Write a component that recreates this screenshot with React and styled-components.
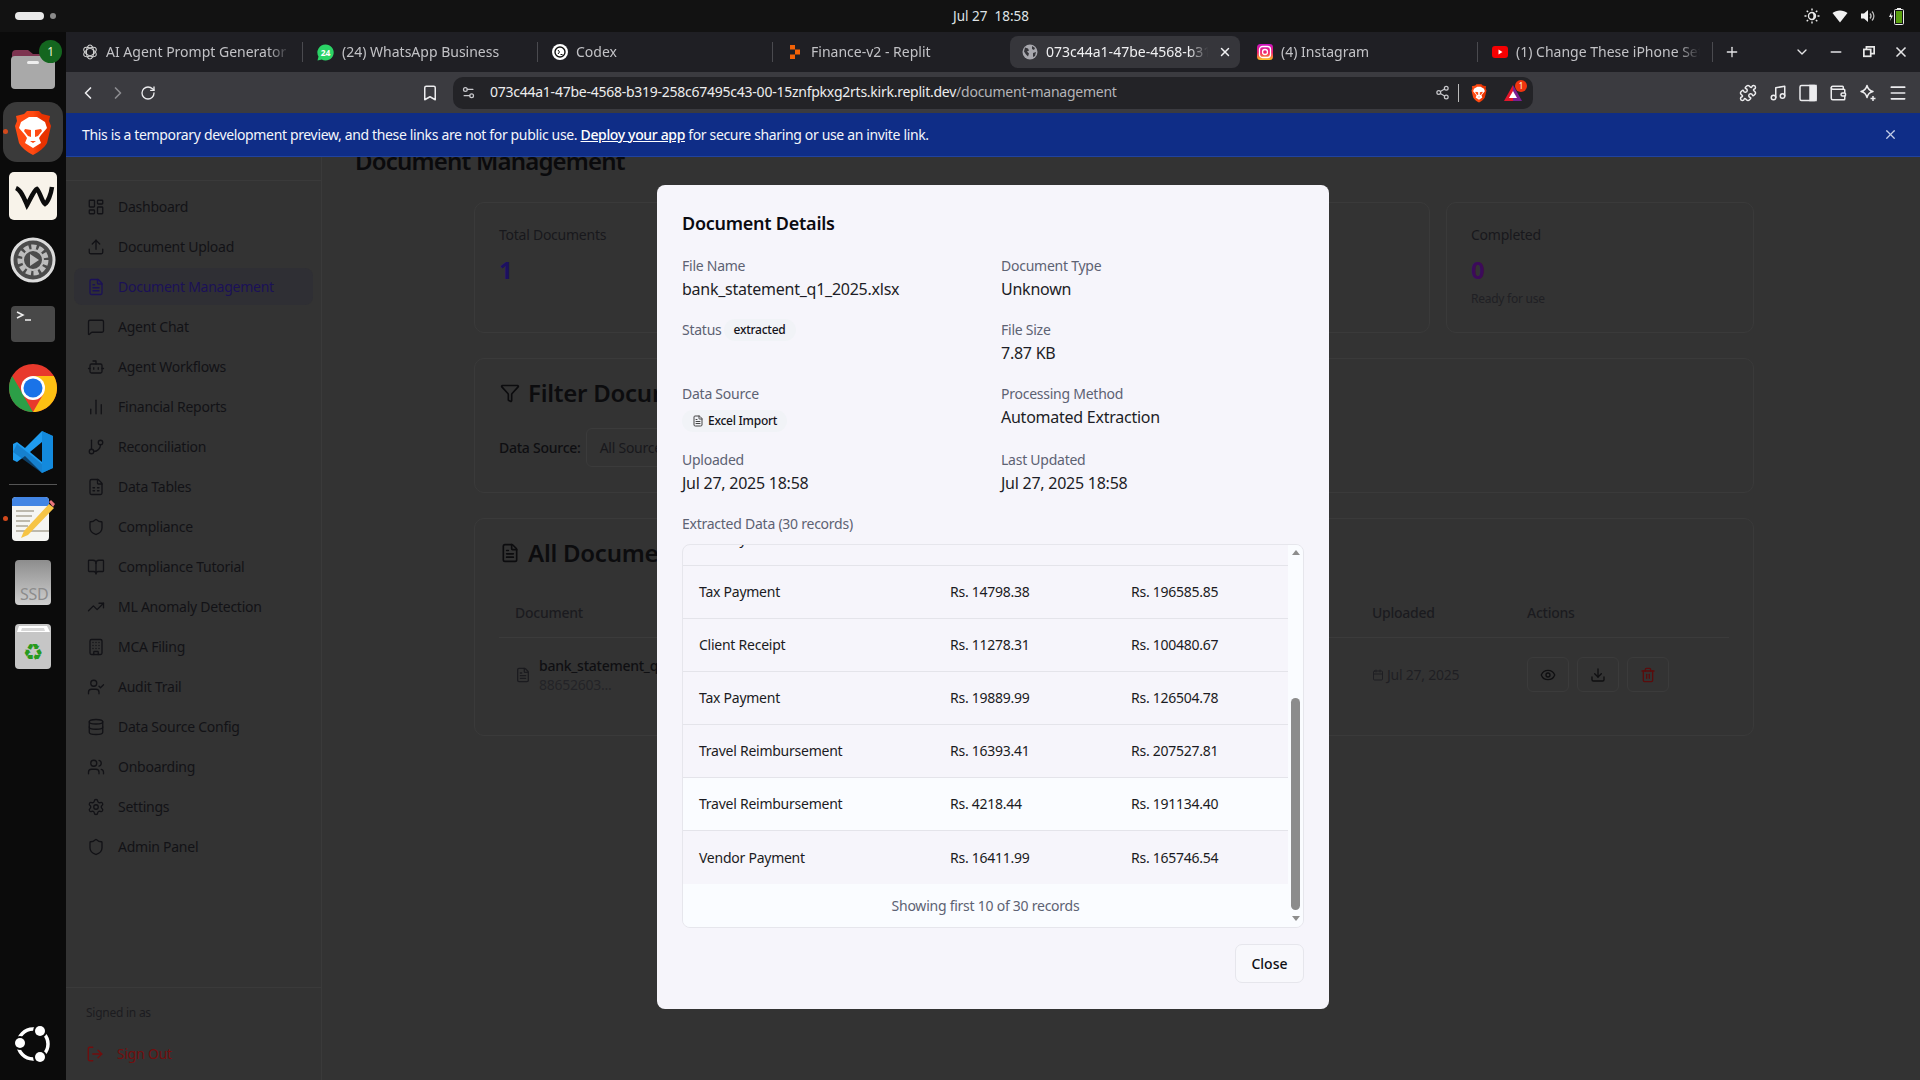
import React from 'react';
import styled, { createGlobalStyle } from 'styled-components';
import {
  LayoutDashboard, Upload, FileText, MessageSquare, Bot, ChartNoAxesColumn, GitBranch, FileSpreadsheet,
  Shield, BookOpen, TrendingUp, Building, UserCheck, Database, Users, Settings, LogOut, Funnel, Eye,
  Download, Trash2, Calendar, ChevronLeft, ChevronRight, RotateCw, Bookmark, Share2, Puzzle, Music,
  Wallet, Menu, X, Plus, ChevronDown, Minus, Settings2,
} from 'lucide-react';

const FONT = `"Noto Sans", "Open Sans", sans-serif`;

const GlobalStyle = createGlobalStyle`
  html, body { margin: 0; padding: 0; background: #111; }
  * { box-sizing: border-box; }
  body { font-family: ${FONT}; letter-spacing: -0.25px; }
`;

const Screen = styled.div`
  width: 1920px;
  height: 1080px;
  display: flex;
  flex-direction: column;
  overflow: hidden;
  background: #111;
`;

/* ---- ubuntu top bar ---- */
const TopBar = styled.div`
  height: 32px;
  flex: none;
  display: flex;
  align-items: center;
  background: #121212;
  color: #dfe3e6;
  font-size: 13.5px;
  letter-spacing: 0;
  padding: 0 16px 0 15px;
`;
const Workspaces = styled.div`
  width: 938px;
  display: flex;
  align-items: center;
  gap: 6px;
`;
const WorkspacePill = styled.span`
  width: 29px;
  height: 8px;
  border-radius: 4px;
  background: #e8e8e8;
`;
const WorkspaceDot = styled.span`
  width: 6px;
  height: 6px;
  border-radius: 50%;
  background: #8a8a8a;
`;
const Clock = styled.div`
  display: flex;
  gap: 7px;
  width: 90px;
`;
const Tray = styled.div`
  margin-left: auto;
  display: flex;
  align-items: center;
  gap: 12px;
`;

/* ---- dock ---- */
const Desktop = styled.div`
  flex: 1;
  display: flex;
  min-height: 0;
`;
const Dock = styled.div`
  width: 66px;
  flex: none;
  display: flex;
  flex-direction: column;
  align-items: center;
  padding: 4px 0;
  background: #0b0b0b;
`;
const DockSlot = styled.div`
  position: relative;
  width: 66px;
  height: 64px;
  flex: none;
  display: flex;
  align-items: center;
  justify-content: center;
  margin-top: ${(p) => (p.$bottom ? 'auto' : '0')};
`;
const DockTile = styled.div`
  width: 60px;
  height: 60px;
  border-radius: 14px;
  background: #3a3a3a;
  display: flex;
  align-items: center;
  justify-content: center;
`;
const DockBadge = styled.span`
  position: absolute;
  top: 4px;
  right: 4px;
  width: 23px;
  height: 23px;
  border-radius: 50%;
  background: #14661f;
  color: #e8f2d0;
  font-size: 12px;
  display: flex;
  align-items: center;
  justify-content: center;
`;
const RunningDot = styled.span`
  position: absolute;
  left: 3px;
  top: 29px;
  width: 5px;
  height: 5px;
  border-radius: 50%;
  background: #d2491c;
`;
const DockRule = styled.div`
  width: 48px;
  height: 1px;
  margin: 0 0 2px;
  background: #555;
  flex: none;
`;

/* ---- browser chrome ---- */
const Browser = styled.div`
  flex: 1;
  min-width: 0;
  display: flex;
  flex-direction: column;
`;
const TabStrip = styled.div`
  height: 40px;
  flex: none;
  display: flex;
  align-items: center;
  padding-left: 2px;
  background: #1f1f24;
`;
const Tab = styled.div`
  position: relative;
  width: 235px;
  height: 40px;
  flex: none;
  display: flex;
  align-items: center;
  gap: 8px;
  padding-left: 14px;
  font-size: 14px;
  letter-spacing: 0;
  color: ${(p) => (p.$active ? '#f0f0f2' : '#c2c2c6')};
  &::before {
    content: '';
    display: ${(p) => (p.$active ? 'block' : 'none')};
    position: absolute;
    inset: 4px 3px 4px 2px;
    border-radius: 8px;
    background: #36363b;
  }
  &::after {
    content: '';
    display: ${(p) => (p.$sep ? 'block' : 'none')};
    position: absolute;
    right: 0;
    top: 10px;
    width: 1px;
    height: 20px;
    background: #4a4a4f;
  }
  svg { position: relative; flex: none; }
`;
const TabTitle = styled.span`
  position: relative;
  width: ${(p) => p.$width || 184}px;
  margin-top: -2px;
  white-space: nowrap;
  overflow: hidden;
  -webkit-mask-image: linear-gradient(to right, #000 88%, transparent);
  mask-image: linear-gradient(to right, #000 88%, transparent);
`;
const TabClose = styled.span`
  position: relative;
  display: flex;
  margin-left: 2px;
  color: #f0f0f2;
`;
const StripButton = styled.span`
  position: absolute;
  top: 0;
  left: ${(p) => p.$left}px;
  height: 40px;
  display: flex;
  align-items: center;
  color: #e4e4e6;
`;
const StripEnd = styled.div`
  position: relative;
  flex: 1;
  height: 40px;
`;
const Toolbar = styled.div`
  height: 41px;
  flex: none;
  display: grid;
  grid-template-columns: 1fr 1080px 1fr;
  align-items: center;
  background: #3b3b40;
`;
const ToolGroup = styled.div`
  display: flex;
  align-items: center;
  padding: 0 7px;
  justify-content: ${(p) => (p.$end ? 'flex-end' : 'flex-start')};
`;
const ToolButton = styled.span`
  width: 30px;
  height: 30px;
  display: flex;
  align-items: center;
  justify-content: center;
  color: ${(p) => (p.$dim ? '#8c8c90' : '#ececee')};
  margin-left: ${(p) => (p.$push ? 'auto' : '0')};
  margin-right: ${(p) => (p.$push ? '1px' : '0')};
`;
const UrlBar = styled.div`
  height: 32px;
  border-radius: 10px;
  background: #232327;
  display: flex;
  align-items: center;
  padding: 0 8px;
  font-size: 14px;
  color: #ededee;
`;
const UrlIcon = styled.span`
  display: flex;
  margin-right: 14px;
  color: #c8c8cc;
`;
const UrlText = styled.span`
  margin-top: -2px;
`;
const UrlPath = styled.span`
  color: #b4b4b8;
`;
const UrlActions = styled.div`
  margin-left: auto;
  display: flex;
  align-items: center;
  gap: 8px;
  padding-right: 3px;
  color: #c8c8cc;
`;
const UrlDivider = styled.span`
  width: 1px;
  height: 18px;
  margin-right: 2px;
  background: #bbb;
`;
const Rewards = styled.span`
  position: relative;
  display: flex;
  margin-left: 7px;
`;
const RewardsBadge = styled.span`
  position: absolute;
  top: -5px;
  right: -5px;
  width: 12px;
  height: 12px;
  border-radius: 50%;
  background: #f0340f;
  color: #ffe;
  font-size: 8px;
  display: flex;
  align-items: center;
  justify-content: center;
`;

/* ---- page under the dialog ---- */
const Viewport = styled.div`
  position: relative;
  flex: 1;
  min-height: 0;
  display: flex;
  flex-direction: column;
  overflow: hidden;
  background: #333;
`;
const Banner = styled.div`
  position: relative;
  z-index: 2;
  height: 44px;
  flex: none;
  display: flex;
  align-items: center;
  justify-content: space-between;
  padding: 0 22px 0 16px;
  background: #0f2d87;
  border-bottom: 1px solid #21439f;
  color: #f4f6fb;
  font-size: 14px;
  letter-spacing: -0.35px;
  a { color: #fff; font-weight: 500; text-decoration: underline; }
  svg { color: #c3cde8; }
`;
const Page = styled.div`
  flex: 1;
  min-height: 0;
  display: flex;
`;
const Sidebar = styled.aside`
  width: 256px;
  flex: none;
  display: flex;
  flex-direction: column;
  border-right: 1px solid #3a3a3a;
`;
const SidebarTop = styled.div`
  height: 24px;
  flex: none;
  border-bottom: 1px solid #3a3a3a;
`;
const NavList = styled.nav`
  display: flex;
  flex-direction: column;
  gap: 3px;
  padding: 7px 8px 0;
`;
const NavItem = styled.div`
  height: 37px;
  display: flex;
  align-items: center;
  gap: 13px;
  padding-left: 13px;
  border-radius: 8px;
  font-size: 14px;
  background: ${(p) => (p.$active ? '#2f2f34' : 'transparent')};
  color: ${(p) => (p.$active ? '#1b1157' : '#121216')};
  svg { flex: none; }
`;
const SidebarFoot = styled.div`
  margin-top: auto;
  height: 93px;
  flex: none;
  border-top: 1px solid #3a3a3a;
  padding: 16px 20px 0;
`;
const SignedIn = styled.div`
  font-size: 12px;
  line-height: 18px;
  color: #1c1c20;
`;
const SignOut = styled.div`
  display: flex;
  align-items: center;
  gap: 13px;
  margin-top: 22px;
  font-size: 14px;
  line-height: 20px;
  color: #720e0e;
`;
const Main = styled.main`
  flex: 1;
  min-width: 0;
  padding-left: 33px;
`;
const PageTitle = styled.h1`
  margin: -14px 0 23px;
  font-size: 24px;
  line-height: 36px;
  font-weight: 600;
  letter-spacing: -0.8px;
  color: #0a0a0c;
`;
const Content = styled.div`
  width: 1280px;
  margin-left: 119px;
  display: flex;
  flex-direction: column;
  gap: 25px;
`;
const StatGrid = styled.div`
  display: grid;
  grid-template-columns: repeat(4, 1fr);
  gap: 16px;
`;
const Card = styled.section`
  border: 1px solid #3a3a3a;
  border-radius: 10px;
  padding: ${(p) => (p.$stat ? '22px' : '23px')} 24px ${(p) => (p.$filter ? '25px' : '24px')};
  min-height: ${(p) => p.$minHeight || 0}px;
`;
const StatLabel = styled.div`
  font-size: 14px;
  line-height: 20px;
  color: #18181c;
`;
const StatValue = styled.div`
  margin-top: 9px;
  font-size: 24px;
  line-height: 32px;
  font-weight: 700;
  color: ${(p) => p.$color};
`;
const StatNote = styled.div`
  font-size: 12px;
  line-height: 18px;
  margin-top: 4px;
  color: #202024;
`;
const CardTitle = styled.h2`
  margin: 0;
  display: flex;
  align-items: center;
  gap: 8px;
  font-size: 24px;
  line-height: 22px;
  font-weight: 600;
  color: #0c0c0e;
  svg { margin-left: 1px; }
`;
const FilterRow = styled.div`
  display: flex;
  align-items: center;
  gap: 5px;
  margin-top: 24px;
  font-size: 14px;
  font-weight: 500;
  color: #0e0e11;
`;
const SelectBox = styled.div`
  width: 200px;
  height: 39px;
  display: flex;
  align-items: center;
  padding-left: 13px;
  border: 1px solid #3b3b3b;
  border-radius: 6px;
  font-weight: 400;
  color: #18181c;
`;
const DocHead = styled.div`
  display: grid;
  grid-template-columns: 857px 155px 1fr;
  align-items: center;
  height: 51px;
  margin-top: 23px;
  padding: 0 16px;
  border-bottom: 1px solid #3b3b3b;
  font-size: 14px;
  font-weight: 500;
  color: #1b1b1f;
`;
const DocRow = styled.div`
  display: grid;
  grid-template-columns: 873px 155px 1fr;
  align-items: center;
  height: 73px;
`;
const DocName = styled.div`
  display: flex;
  align-items: center;
  gap: 8px;
  padding-left: 16px;
  color: #1b1b1f;
`;
const DocTitle = styled.div`
  font-size: 14px;
  line-height: 20px;
  font-weight: 500;
  color: #0f0f12;
`;
const DocId = styled.div`
  font-size: 14px;
  line-height: 18px;
  color: #232327;
`;
const DocDate = styled.div`
  display: flex;
  align-items: center;
  gap: 3px;
  font-size: 14px;
  color: #1f1f23;
`;
const DocActions = styled.div`
  display: flex;
  gap: 8px;
`;
const ActionButton = styled.span`
  width: 42px;
  height: 35px;
  display: flex;
  align-items: center;
  justify-content: center;
  border: 1px solid #3b3b3b;
  border-radius: 6px;
  color: ${(p) => (p.$danger ? '#5a0c0c' : '#0f0f11')};
`;

/* ---- dialog ---- */
const Overlay = styled.div`
  position: absolute;
  inset: 0;
  z-index: 1;
  display: flex;
  align-items: center;
  justify-content: center;
`;
const Dialog = styled.div`
  width: 672px;
  height: 824px;
  display: flex;
  flex-direction: column;
  padding: 24px 25px 0;
  border-radius: 8px;
  background: #f6f5fb;
  color: #15151c;
`;
const DialogTitle = styled.h3`
  margin: 0 0 19px;
  font-size: 18px;
  line-height: 28px;
  font-weight: 600;
  color: #0b0b10;
`;
const DetailGrid = styled.div`
  display: grid;
  grid-template-columns: 303px 303px;
  column-gap: 16px;
  row-gap: 19px;
`;
const Label = styled.div`
  font-size: 14px;
  line-height: 20px;
  color: #5d6273;
`;
const Value = styled.div`
  margin-top: 1px;
  font-size: 16px;
  line-height: 24px;
  color: #1d1d26;
`;
const InlineField = styled.div`
  display: flex;
  align-items: flex-start;
  gap: 2px;
`;
const Pill = styled.span`
  display: inline-flex;
  align-items: center;
  gap: 4px;
  height: 22px;
  padding: 0 10px;
  border-radius: 11px;
  background: #f1f3f7;
  font-size: 12px;
  font-weight: 500;
  color: #14141a;
  margin-top: ${(p) => (p.$below ? '6px' : '-1px')};
  margin-bottom: ${(p) => (p.$below ? '-1px' : '0')};
  svg { color: #444; }
`;
const DataSourceField = styled.div`
  height: 47px;
`;
const SectionLabel = styled(Label)`
  margin-top: 19px;
`;
const RecordBox = styled.div`
  margin-top: 10px;
  height: 384px;
  flex: none;
  display: flex;
  overflow: hidden;
  border: 1px solid #e6e6ec;
  border-radius: 8px;
`;
const RecordScroll = styled.div`
  flex: 1;
  min-width: 0;
  overflow: hidden;
`;
const RecordList = styled.div`
  margin-top: -32px;
`;
const RecordRow = styled.div`
  height: 53px;
  display: grid;
  grid-template-columns: 251px 181px 1fr;
  align-items: center;
  padding-left: 16px;
  border-bottom: ${(p) => (p.$last ? 'none' : '1px solid #e4e4ea')};
  background: ${(p) => (p.$light ? '#fafcff' : 'transparent')};
  font-size: 14px;
  color: #1b1b22;
`;
const RecordFoot = styled.div`
  height: 44px;
  display: flex;
  align-items: center;
  justify-content: center;
  background: #fafcff;
  font-size: 14px;
  color: #5d6273;
`;
const ScrollTrack = styled.div`
  width: 15px;
  flex: none;
  display: flex;
  flex-direction: column;
  align-items: center;
  background: #fafcff;
`;
const ScrollArrow = styled.span`
  width: 0;
  height: 0;
  flex: none;
  margin: ${(p) => (p.$up ? '5px 0 0' : 'auto 0 6px')};
  border-left: 4px solid transparent;
  border-right: 4px solid transparent;
  border-bottom: ${(p) => (p.$up ? '5px solid #8d8d8d' : 'none')};
  border-top: ${(p) => (p.$up ? 'none' : '5px solid #8d8d8d')};
`;
const ScrollThumb = styled.div`
  width: 9px;
  height: 212px;
  margin-top: 143px;
  border-radius: 5px;
  background: #8c8c8c;
  flex: none;
`;
const DialogFoot = styled.div`
  display: flex;
  justify-content: flex-end;
  margin-top: 16px;
`;
const CloseButton = styled.button`
  width: 69px;
  height: 39px;
  border: 1px solid #e6e6ec;
  border-radius: 7px;
  background: #f8f8fc;
  font-family: ${FONT};
  font-size: 14px;
  font-weight: 500;
  color: #0f0f14;
`;

/* ---- drawn logos ---- */
const BraveLogo = ({ size = 48 }) => (
  <svg width={size} height={size} viewBox="0 0 48 48">
    <defs>
      <linearGradient id="braveFill" x1="0" x2="1" y1="0" y2="0">
        <stop offset="0.5" stopColor="#ff4a12" />
        <stop offset="0.72" stopColor="#e83200" />
      </linearGradient>
    </defs>
    <path fill="url(#braveFill)" d="M24 47C18 44 12 39 10 35L6 18l2-5-1-5 8-2 3-3h12l3 3 8 2-1 5 2 5-4 17c-2 4-8 9-14 12Z" />
    <path fill="#fff" d="M12 14l8-5h8l8 5 2 6-6 7-2 3 2 5-8 5-8-5 2-5-2-3-6-7Z" />
    <path fill="#ff4a12" d="M16 21l6 1v7l-3-1-4-5ZM32 21l-6 1v7l3-1 4-5ZM21 33h6l-3 2Z" />
  </svg>
);

const dockIcons = {
  files: (
    <svg width="46" height="44" viewBox="0 0 46 44">
      <path fill="#7d3450" d="M2 8a4 4 0 0 1 4-4h12l5 4h14a4 4 0 0 1 4 4v6H2Z" />
      <rect x="1" y="10" width="44" height="33" rx="4" fill="#a9a9a9" />
      <rect x="17" y="15" width="12" height="3" rx="1.5" fill="#eee" />
    </svg>
  ),
  w: (
    <svg width="48" height="48" viewBox="0 0 48 48">
      <rect width="48" height="48" rx="5" fill="#f8f3ea" />
      <path fill="none" stroke="#0c0c0c" strokeWidth="4.5" d="M7 16c5 2 8 10 11 17 3-5 7-15 10-16 3 3 5 13 8 15 3-2 6-10 7-17" />
    </svg>
  ),
  settings: (
    <svg width="46" height="46" viewBox="0 0 46 46">
      <circle cx="23" cy="23" r="21" fill="#4b4b4b" stroke="#dcdcdc" strokeWidth="3" />
      <circle cx="23" cy="23" r="13" fill="none" stroke="#bdbdbd" strokeWidth="5" strokeDasharray="5 2.4" />
      <circle cx="23" cy="23" r="10" fill="none" stroke="#bdbdbd" strokeWidth="2" />
      <path fill="#bdbdbd" d="M20 17l9 6-9 6Z" />
    </svg>
  ),
  terminal: (
    <svg width="44" height="36" viewBox="0 0 44 36">
      <rect width="44" height="36" rx="4" fill="#484848" />
      <path fill="none" stroke="#f0f0f0" strokeWidth="1.5" d="M6 6l6 3-6 3M14 14h6" />
    </svg>
  ),
  chrome: (
    <svg width="48" height="48" viewBox="0 0 48 48">
      <circle cx="24" cy="24" r="24" fill="#e8392c" />
      <path fill="#2c9e47" d="M3.2 12 15 32l-.3 0 9.3 16C10.7 48 0 37.3 0 24c0-4.400 1.200-8.500 3.200-12Z" />
      <path fill="#fdc013" d="M24 48l10.400-18 .1-.2L24 12h20.800C46.800 15.500 48 19.600 48 24c0 13.300-10.700 24-24 24Z" />
      <circle cx="24" cy="24" r="12" fill="#fff" />
      <circle cx="24" cy="24" r="9.500" fill="#1a73e8" />
    </svg>
  ),
  vscode: (
    <svg width="44" height="44" viewBox="0 0 44 44">
      <path fill="#1f9cf0" d="M31 1l11 5v32l-11 5-17-17 -8 6-4-2v-16l4-2 8 6Z" />
      <path fill="#0b7fd0" d="M31 1v42l11-5V6Z" opacity="0.6" />
      <path fill="#0b0b0b" d="M31 12 19 22l12 10Z" />
      <path fill="#0f6cb4" d="M6 14l25 20v9L2 22Z" opacity="0.55" />
    </svg>
  ),
  notes: (
    <svg width="44" height="46" viewBox="0 0 44 46">
      <rect x="1" y="1" width="37" height="44" rx="4" fill="#f5f5f2" />
      <path fill="#4285e4" d="M1 10V5a4 4 0 0 1 4-4h29a4 4 0 0 1 4 4v5Z" />
      <path stroke="#bdb9ad" strokeWidth="2" d="M5 15h18M5 20h16M5 25h14M5 30h12M5 35h33" />
      <path fill="#f6c445" d="M38 8l5 4-26 27-7 3 3-7Z" />
      <path fill="#e8747c" d="M38 6l2-2 4 4-2 3Z" />
    </svg>
  ),
  ssd: (
    <svg width="38" height="46" viewBox="0 0 38 46">
      <defs>
        <linearGradient id="ssdFill" x1="0" x2="0" y1="0" y2="1">
          <stop offset="0" stopColor="#8d8d8d" />
          <stop offset="1" stopColor="#cfcfcf" />
        </linearGradient>
      </defs>
      <rect x="1" width="36" height="45" rx="4" fill="url(#ssdFill)" />
      <text x="6" y="40" fontSize="16" fill="#8c8c8c" fontFamily={FONT}>SSD</text>
    </svg>
  ),
  trash: (
    <svg width="38" height="46" viewBox="0 0 38 46">
      <rect x="1" width="36" height="45" rx="4" fill="#c6c6c6" />
      <path fill="#fff" d="M5 2h28l3 6H3Z" />
      <path fill="#d8d8d8" d="M8 4h22l1 3H7Z" />
      <text x="19" y="36" textAnchor="middle" fontSize="23" fill="#279a1d" fontFamily='"DejaVu Sans", sans-serif'>♻</text>
    </svg>
  ),
  ubuntu: (
    <svg width="38" height="38" viewBox="0 0 38 38">
      <circle cx="19" cy="19" r="15" fill="none" stroke="#fff" strokeWidth="3.5" />
      <circle cx="6" cy="18" r="7" fill="#0b0b0b" />
      <circle cx="26" cy="6" r="7" fill="#0b0b0b" />
      <circle cx="26" cy="32" r="7" fill="#0b0b0b" />
      <circle cx="6" cy="18" r="5" fill="#fff" />
      <circle cx="26" cy="6" r="5" fill="#fff" />
      <circle cx="26" cy="32" r="5" fill="#fff" />
    </svg>
  ),
};

const siteIcons = {
  openai: (
    <svg width="16" height="16" viewBox="0 0 16 16" fill="none" stroke="#cfcfcf" strokeWidth="1.1">
      <ellipse cx="8" cy="8" rx="3.6" ry="7" />
      <ellipse cx="8" cy="8" rx="3.6" ry="7" transform="rotate(60 8 8)" />
      <ellipse cx="8" cy="8" rx="3.6" ry="7" transform="rotate(120 8 8)" />
    </svg>
  ),
  whatsapp: (
    <svg width="17" height="17" viewBox="0 0 17 17">
      <path fill="#2bd366" d="M8.500.5a8 8 0 1 1-3.700 15L.5 16.500l1-4A8 8 0 0 1 8.500.5Z" />
      <text x="8.500" y="11.500" textAnchor="middle" fontSize="8.500" fontWeight="700" fill="#fff" fontFamily={FONT}>24</text>
    </svg>
  ),
  codex: (
    <svg width="16" height="16" viewBox="0 0 16 16">
      <circle cx="8" cy="8" r="8" fill="#fff" />
      <circle cx="8" cy="8" r="5" fill="none" stroke="#111" strokeWidth="1.4" />
      <path stroke="#111" strokeWidth="1" fill="none" d="M6 6l1.500 2L6 10M8.500 10.500h2" />
    </svg>
  ),
  replit: (
    <svg width="16" height="16" viewBox="0 0 16 16" fill="#f26207">
      <path d="M3 1h5v4.500H3ZM8 5.500h5v5H8ZM3 10.500h5V15H3Z" />
    </svg>
  ),
  globe: (
    <svg width="16" height="16" viewBox="0 0 16 16">
      <circle cx="8" cy="8" r="7.500" fill="#a8a8ae" />
      <path fill="#36363b" d="M3 3.500l3 1 1 2-2 1 2 2-1 3-2-2-2-3ZM10 2l3 2-1 2-2-1ZM11 9l3-1-1 4-2 1Z" />
    </svg>
  ),
  instagram: (
    <svg width="16" height="16" viewBox="0 0 16 16">
      <defs>
        <linearGradient id="igFill" x1="0" x2="0" y1="0" y2="1">
          <stop offset="0" stopColor="#c913c4" />
          <stop offset="0.55" stopColor="#f2236a" />
          <stop offset="1" stopColor="#fdc31c" />
        </linearGradient>
      </defs>
      <rect width="16" height="16" rx="3.500" fill="url(#igFill)" />
      <rect x="2.500" y="2.500" width="11" height="11" rx="3" fill="none" stroke="#fff" strokeWidth="1.3" />
      <circle cx="8" cy="8" r="2.500" fill="none" stroke="#fff" strokeWidth="1.3" />
    </svg>
  ),
  youtube: (
    <svg width="16" height="16" viewBox="0 0 16 16">
      <rect y="2" width="16" height="12" rx="3" fill="#f60002" />
      <path fill="#fff" d="M6.500 5.500 10.500 8l-4 2.500Z" />
    </svg>
  ),
};

const tabs = [
  { icon: 'openai', title: 'AI Agent Prompt Generator', sep: true },
  { icon: 'whatsapp', title: '(24) WhatsApp Business', sep: true },
  { icon: 'codex', title: 'Codex', sep: true },
  { icon: 'replit', title: 'Finance-v2 - Replit', sep: false },
  { icon: 'globe', title: '073c44a1-47be-4568-b319-258c67495c43', active: true, width: 162 },
  { icon: 'instagram', title: '(4) Instagram', sep: true },
  { icon: 'youtube', title: '(1) Change These iPhone Settings', sep: true },
];

const navItems = [
  ['Dashboard', LayoutDashboard],
  ['Document Upload', Upload],
  ['Document Management', FileText, true],
  ['Agent Chat', MessageSquare],
  ['Agent Workflows', Bot],
  ['Financial Reports', ChartNoAxesColumn],
  ['Reconciliation', GitBranch],
  ['Data Tables', FileSpreadsheet],
  ['Compliance', Shield],
  ['Compliance Tutorial', BookOpen],
  ['ML Anomaly Detection', TrendingUp],
  ['MCA Filing', Building],
  ['Audit Trail', UserCheck],
  ['Data Source Config', Database],
  ['Onboarding', Users],
  ['Settings', Settings],
  ['Admin Panel', Shield],
];

const records = [
  ['Tax Payment', 'Rs. 12450.20', 'Rs. 184220.10'],
  ['Tax Payment', 'Rs. 14798.38', 'Rs. 196585.85'],
  ['Client Receipt', 'Rs. 11278.31', 'Rs. 100480.67'],
  ['Tax Payment', 'Rs. 19889.99', 'Rs. 126504.78'],
  ['Travel Reimbursement', 'Rs. 16393.41', 'Rs. 207527.81'],
  ['Travel Reimbursement', 'Rs. 4218.44', 'Rs. 191134.40', true],
  ['Vendor Payment', 'Rs. 16411.99', 'Rs. 165746.54'],
];

const App = () => (
  <Screen>
    <GlobalStyle />
    <TopBar>
      <Workspaces>
        <WorkspacePill />
        <WorkspaceDot />
      </Workspaces>
      <Clock>
        <span>Jul 27</span>
        <span>18:58</span>
      </Clock>
      <Tray>
        <svg width="16" height="16" viewBox="0 0 16 16" fill="none" stroke="#e8e8e8" strokeWidth="1.4">
          <circle cx="8" cy="8" r="3.500" />
          <path fill="#e8e8e8" stroke="none" d="M8 4.500a3.500 3.500 0 0 1 0 7 5 5 0 0 0 0-7Z" />
          <path d="M8 .5v2M8 13.500v2M.5 8h2M13.500 8h2M2.700 2.700l1.400 1.400M11.900 11.900l1.400 1.400M2.700 13.300l1.400-1.400M11.900 4.100l1.400-1.400" />
        </svg>
        <svg width="16" height="14" viewBox="0 0 16 14"><path fill="#f2f2f2" d="M8 13.500.5 4C4.500.5 11.500.5 15.500 4Z" /></svg>
        <svg width="16" height="14" viewBox="0 0 16 14">
          <path fill="#f0f0f0" d="M1 4.500h3L8 1v12L4 9.500H1Z" />
          <path fill="none" stroke="#bbb" strokeWidth="1.300" d="M10 4.500c1.300 1.500 1.300 3.500 0 5M12 2.500c2.500 2.500 2.500 6.500 0 9" />
        </svg>
        <svg width="16" height="18" viewBox="0 0 16 18">
          <path fill="#eee" d="M3.500 5 1 10h2L2 14l3-5.500H3Z" />
          <rect x="6.500" y="2.500" width="9" height="15" rx="1" fill="none" stroke="#eee" />
          <rect x="9" y="1" width="4" height="1.500" fill="#eee" />
          <rect x="8" y="4" width="6" height="12" fill="#5aa010" />
        </svg>
      </Tray>
    </TopBar>

    <Desktop>
      <Dock>
        <DockSlot>{dockIcons.files}<DockBadge>1</DockBadge></DockSlot>
        <DockSlot>
          <DockTile><BraveLogo /></DockTile>
          <RunningDot />
        </DockSlot>
        <DockSlot>{dockIcons.w}</DockSlot>
        <DockSlot>{dockIcons.settings}</DockSlot>
        <DockSlot>{dockIcons.terminal}</DockSlot>
        <DockSlot>{dockIcons.chrome}</DockSlot>
        <DockSlot>{dockIcons.vscode}</DockSlot>
        <DockRule />
        <DockSlot>{dockIcons.notes}<RunningDot /></DockSlot>
        <DockSlot>{dockIcons.ssd}</DockSlot>
        <DockSlot>{dockIcons.trash}</DockSlot>
        <DockSlot $bottom>{dockIcons.ubuntu}</DockSlot>
      </Dock>

      <Browser>
        <TabStrip>
          {tabs.map((t) => (
            <Tab key={t.title} $active={t.active} $sep={t.sep}>
              {siteIcons[t.icon]}
              <TabTitle $width={t.width}>{t.title}</TabTitle>
              {t.active && <TabClose><X size={14} strokeWidth={2.5} /></TabClose>}
            </Tab>
          ))}
          <StripEnd>
            <StripButton $left={11}><Plus size={16} /></StripButton>
            <StripButton $left={81}><ChevronDown size={16} /></StripButton>
            <StripButton $left={115}><Minus size={16} strokeWidth={2.5} /></StripButton>
            <StripButton $left={150}>
              <svg width="12" height="12" viewBox="0 0 14 14" fill="none" stroke="#e8e8e8" strokeWidth="2">
                <rect x="1" y="4" width="8" height="8" />
                <path d="M4 4V1h9v8h-4" />
              </svg>
            </StripButton>
            <StripButton $left={180}><X size={16} strokeWidth={2.5} /></StripButton>
          </StripEnd>
        </TabStrip>

        <Toolbar>
          <ToolGroup>
            <ToolButton><ChevronLeft size={20} /></ToolButton>
            <ToolButton $dim><ChevronRight size={20} /></ToolButton>
            <ToolButton><RotateCw size={16} /></ToolButton>
            <ToolButton $push><Bookmark size={18} /></ToolButton>
          </ToolGroup>
          <UrlBar>
            <UrlIcon><Settings2 size={15} /></UrlIcon>
            <UrlText>073c44a1-47be-4568-b319-258c67495c43-00-15znfpkxg2rts.kirk.replit.dev<UrlPath>/document-management</UrlPath></UrlText>
            <UrlActions>
              <Share2 size={15} />
              <UrlDivider />
              <BraveLogo size={20} />
              <Rewards>
                <svg width="18" height="16" viewBox="0 0 18 16">
                  <path fill="#e3162b" d="M9 0 0 16h9Z" />
                  <path fill="#7b1e92" d="M9 0l9 16H9Z" />
                  <path fill="#fff" d="M9 6l4 7H5Z" />
                </svg>
                <RewardsBadge>1</RewardsBadge>
              </Rewards>
            </UrlActions>
          </UrlBar>
          <ToolGroup $end>
            <ToolButton><Puzzle size={18} /></ToolButton>
            <ToolButton><Music size={18} /></ToolButton>
            <ToolButton>
              <svg width="18" height="18" viewBox="0 0 18 18" fill="none" stroke="#ececee" strokeWidth="1.5">
                <rect x="1" y="1.500" width="16" height="15" rx="1.500" />
                <rect x="11" y="1.500" width="6" height="15" fill="#ececee" />
              </svg>
            </ToolButton>
            <ToolButton><Wallet size={18} /></ToolButton>
            <ToolButton>
              <svg width="18" height="18" viewBox="0 0 18 18" fill="none" stroke="#ececee" strokeWidth="1.5" strokeLinejoin="round">
                <path d="M8 1.500c.8 3.500 2.500 5.200 6 6-3.500.8-5.200 2.500-6 6-.8-3.500-2.500-5.200-6-6 3.500-.8 5.200-2.500 6-6Z" />
                <path d="M14 12v5M11.500 14.500h5" />
              </svg>
            </ToolButton>
            <ToolButton><Menu size={20} /></ToolButton>
          </ToolGroup>
        </Toolbar>

        <Viewport>
          <Banner>
            <span>
              This is a temporary development preview, and these links are not for public use. <a>Deploy your app</a> for secure sharing or use an invite link.
            </span>
            <X size={15} />
          </Banner>
          <Page>
            <Sidebar>
              <SidebarTop />
              <NavList>
                {navItems.map(([label, Icon, active]) => (
                  <NavItem key={label} $active={active}>
                    <Icon size={18} strokeWidth={1.75} />
                    {label}
                  </NavItem>
                ))}
              </NavList>
              <SidebarFoot>
                <SignedIn>Signed in as</SignedIn>
                <SignOut><LogOut size={18} strokeWidth={1.75} />Sign Out</SignOut>
              </SidebarFoot>
            </Sidebar>
            <Main>
              <PageTitle>Document Management</PageTitle>
              <Content>
                <StatGrid>
                  <Card $stat $minHeight={128}>
                    <StatLabel>Total Documents</StatLabel>
                    <StatValue $color="#1c1061">1</StatValue>
                  </Card>
                  <Card />
                  <Card />
                  <Card $stat>
                    <StatLabel>Completed</StatLabel>
                    <StatValue $color="#3c0a5a">0</StatValue>
                    <StatNote>Ready for use</StatNote>
                  </Card>
                </StatGrid>
                <Card $filter>
                  <CardTitle><Funnel size={20} />Filter Documents</CardTitle>
                  <FilterRow>
                    Data Source:
                    <SelectBox>All Sources</SelectBox>
                  </FilterRow>
                </Card>
                <Card>
                  <CardTitle><FileText size={20} />All Documents</CardTitle>
                  <DocHead>
                    <span>Document</span>
                    <span>Uploaded</span>
                    <span>Actions</span>
                  </DocHead>
                  <DocRow>
                    <DocName>
                      <FileText size={16} />
                      <div>
                        <DocTitle>bank_statement_q1_2025.xlsx</DocTitle>
                        <DocId>88652603...</DocId>
                      </div>
                    </DocName>
                    <DocDate><Calendar size={12} />Jul 27, 2025</DocDate>
                    <DocActions>
                      <ActionButton><Eye size={16} /></ActionButton>
                      <ActionButton><Download size={16} /></ActionButton>
                      <ActionButton $danger><Trash2 size={16} /></ActionButton>
                    </DocActions>
                  </DocRow>
                </Card>
              </Content>
            </Main>
          </Page>

          <Overlay>
            <Dialog>
              <DialogTitle>Document Details</DialogTitle>
              <DetailGrid>
                <div>
                  <Label>File Name</Label>
                  <Value>bank_statement_q1_2025.xlsx</Value>
                </div>
                <div>
                  <Label>Document Type</Label>
                  <Value>Unknown</Value>
                </div>
                <InlineField>
                  <Label>Status</Label>
                  <Pill>extracted</Pill>
                </InlineField>
                <div>
                  <Label>File Size</Label>
                  <Value>7.87 KB</Value>
                </div>
                <DataSourceField>
                  <Label>Data Source</Label>
                  <Pill $below><FileText size={12} />Excel Import</Pill>
                </DataSourceField>
                <div>
                  <Label>Processing Method</Label>
                  <Value>Automated Extraction</Value>
                </div>
                <div>
                  <Label>Uploaded</Label>
                  <Value>Jul 27, 2025 18:58</Value>
                </div>
                <div>
                  <Label>Last Updated</Label>
                  <Value>Jul 27, 2025 18:58</Value>
                </div>
              </DetailGrid>
              <SectionLabel>Extracted Data (30 records)</SectionLabel>
              <RecordBox>
                <RecordScroll>
                  <RecordList>
                    {records.map(([name, amount, balance, light], i) => (
                      <RecordRow key={i} $light={light} $last={i === records.length - 1}>
                        <span>{name}</span>
                        <span>{amount}</span>
                        <span>{balance}</span>
                      </RecordRow>
                    ))}
                  </RecordList>
                  <RecordFoot>Showing first 10 of 30 records</RecordFoot>
                </RecordScroll>
                <ScrollTrack>
                  <ScrollArrow $up />
                  <ScrollThumb />
                  <ScrollArrow />
                </ScrollTrack>
              </RecordBox>
              <DialogFoot>
                <CloseButton>Close</CloseButton>
              </DialogFoot>
            </Dialog>
          </Overlay>
        </Viewport>
      </Browser>
    </Desktop>
  </Screen>
);

export default App;
